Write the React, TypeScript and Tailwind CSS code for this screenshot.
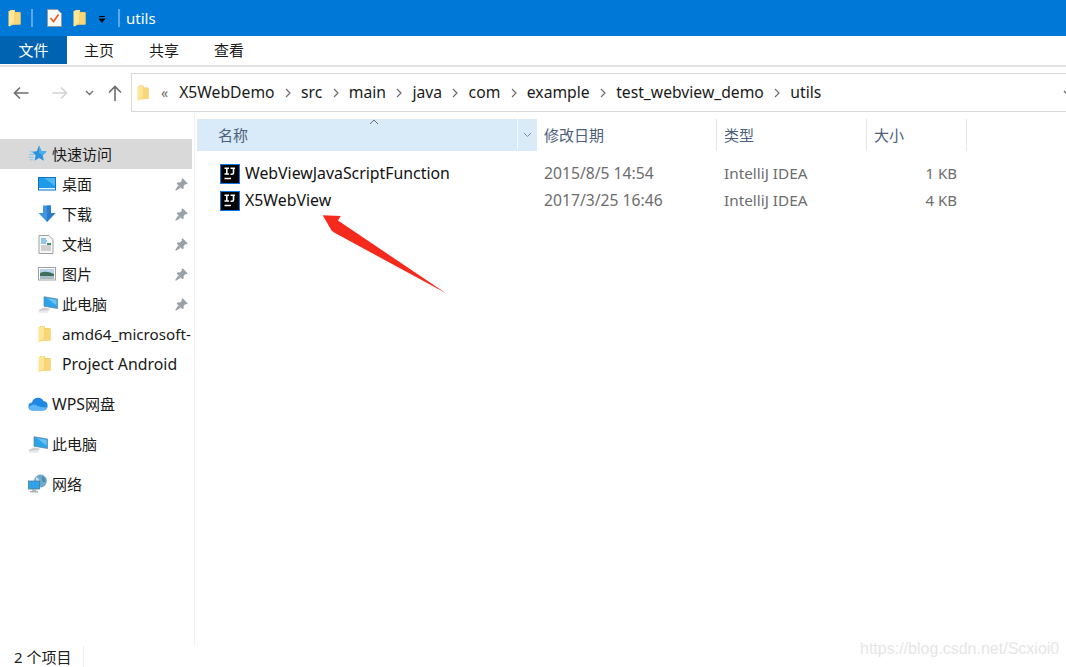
import React from "react";

const Folder = ({ className = "" }: { className?: string }) => (
  <svg viewBox="0 0 13 18" className={className}>
    <path d="M2 1 L7 1 L7 3 L11.5 3 Q12.5 3 12.5 4 L12.5 15.5 L2 15.5 Z" fill="#eec25c" />
    <path d="M0.5 2 L6.5 0.8 L6.5 14.5 L1.5 17.5 L0.5 17 Z" fill="#ffe596" />
    <path d="M6.5 3.5 L12.5 3.5 L12.5 15.5 L1.5 15.8 L6.5 13.5 Z" fill="#f8d577" />
  </svg>
);

const Pin = () => (
  <svg viewBox="0 0 14 14" className="h-[13px] w-[13px] shrink-0">
    <path d="M8.2 0.3 L13.7 5.8 L12.4 7 L11.3 6.5 L9.2 8.6 L9.4 11 L8 12.2 L1.8 6 L3 4.6 L5.4 4.8 L7.5 2.7 L7 1.6 Z" fill="#98a0a8" />
    <path d="M3.6 7.8 L6.2 10.4 L1 13.7 L0.3 13 Z" fill="#98a0a8" />
  </svg>
);

const Star = () => (
  <svg viewBox="0 0 19 18" className="h-[18px] w-[19px]">
    <path d="M11 0.5 L13.4 6 L18.6 6.4 L14.7 10.2 L15.9 15.8 L11 13 L6.6 15.8 L7.6 10.3 L4 6.8 L8.8 6.2 Z" fill="#2b93dd" />
    <path d="M11 0.5 L13.4 6 L18.6 6.4 L14.7 10.2 L11 8 Z" fill="#4aaeea" />
    <path d="M2 6.8 H5.5 M1 9.5 H6 M0.5 12.2 H5.5 M2 14.8 H5" stroke="#84c5f0" strokeWidth="1" />
  </svg>
);

const Desktop = () => (
  <svg viewBox="0 0 18 14" className="h-[14px] w-[18px]">
    <rect x="0.5" y="0.5" width="17" height="12.5" fill="#1e9be8" stroke="#0d74c6" />
    <path d="M6 1 H17 V9 Z" fill="#4db8f5" />
    <rect x="1" y="11" width="16" height="1.4" fill="#e8f6ff" />
  </svg>
);

const DownArrow = () => (
  <svg viewBox="0 0 18 18" className="h-[18px] w-[18px]">
    <path d="M5 0.5 H13 V8 H17.5 L9 17 L0.5 8 H5 Z" fill="#3f95e2" />
    <path d="M9 0.5 H13 V8 H17.5 L9 17 Z" fill="#2a7ccb" />
  </svg>
);

const Doc = () => (
  <svg viewBox="0 0 16 19" className="h-[19px] w-[16px]">
    <path d="M1 0.5 H11 L15 4.5 V18.5 H1 Z" fill="#f7f7f7" stroke="#a0a0a0" />
    <path d="M3 4 H8 M3 6 H9 M3 8 H8" stroke="#2f93d8" strokeWidth="1" />
    <path d="M3 11 H13 M3 13 H13 M3 15 H13" stroke="#a8a8a8" strokeWidth="1" />
    <rect x="9" y="8" width="4" height="2" fill="#3a8f6f" />
  </svg>
);

const Picture = () => (
  <svg viewBox="0 0 18 14" className="h-[14px] w-[18px]">
    <rect x="0.5" y="0.5" width="17" height="12.5" fill="#fff" stroke="#a0a0a0" />
    <rect x="2" y="2" width="14" height="5" fill="#b8d4ea" />
    <path d="M2 6 Q8 3 16 7 V11.5 H2 Z" fill="#3f6f5f" />
    <rect x="2" y="9" width="14" height="2.5" fill="#a8bec8" />
  </svg>
);

const Pc = () => (
  <svg viewBox="0 0 20 17" className="h-[17px] w-[20px]">
    <path d="M6 0.8 L19.5 3 V12.5 L6 10.2 Z" fill="#2ea3ea" stroke="#5f7f95" strokeWidth="0.7" />
    <path d="M9 2.2 L18.5 3.8 V9.5 Z" fill="#66c4f7" />
    <path d="M6 11.5 L12 12.8 L10.5 14.5 L1.5 15 L0.5 14 Z" fill="#cfcfcf" />
    <path d="M0.5 15.2 L10.5 15 L9.5 16.8 L1.5 16.8 Z" fill="#e6e6e6" />
  </svg>
);

const Cloud = () => (
  <svg viewBox="0 0 20 14" className="h-[14px] w-[20px]">
    <path d="M5 13.5 A4 4 0 0 1 4 5.5 A6.2 6.2 0 0 1 15.5 4 A4.8 4.8 0 0 1 15.5 13.5 Z" fill="#1f88e5" />
    <path d="M0.8 10 Q5 5.5 10 9 Q13 11 19.5 10 Q18.5 13.5 15 13.5 H5 Q1.5 13.5 0.8 10 Z" fill="#5db5f6" />
  </svg>
);

const Network = () => (
  <svg viewBox="0 0 20 20" className="h-[20px] w-[20px]">
    <circle cx="12.5" cy="7" r="6.4" fill="#6fa9c9" />
    <path d="M8 3 Q12 5 11 8 Q9 10 8 7 Z" fill="#cfe2ec" />
    <path d="M14 2 Q18 4 17 8 Q15 9 14 6 Z" fill="#4d8aae" />
    <rect x="0.5" y="7" width="11" height="8" fill="#2ea3ea" stroke="#4c7a96" strokeWidth="0.8" />
    <path d="M4 15 H8 V17 H10 V18.5 H2 V17 H4 Z" fill="#a9b4bb" />
  </svg>
);

const IJ = () => (
  <div className="flex h-5 w-5 shrink-0 flex-col items-start border border-[#0a78e6] bg-black px-[3px] pt-[2px]">
    <svg viewBox="0 0 12 14" className="h-[14px] w-[12px]">
      <path d="M0.5 1.2 H5 M2.8 1.2 V7 M0.5 7 H5 M6.5 1.2 H11 M9.5 1.2 V6 Q9.5 7.2 8 7.2 H6.5" stroke="#fff" strokeWidth="1.6" fill="none" />
      <path d="M0.5 11.5 H7" stroke="#fff" strokeWidth="1.5" />
    </svg>
  </div>
);

const Crumb = () => (
  <svg viewBox="0 0 8 10" className="h-[10px] w-2 shrink-0">
    <path d="M2 1 L6 5 L2 9" stroke="#6d6d6d" strokeWidth="1.2" fill="none" />
  </svg>
);

const Cjk = ({ children }: { children: React.ReactNode }) => <span className="text-[15px]">{children}</span>;

const NavItem = ({
  icon,
  label,
  pin,
  top,
  active,
}: {
  icon: React.ReactNode;
  label: React.ReactNode;
  pin?: boolean;
  top?: boolean;
  active?: boolean;
}) => (
  <div
    className={`flex h-[30px] items-center overflow-hidden whitespace-nowrap ${top ? "pl-[28px]" : "pl-[38px]"} ${active ? "bg-[#d9d9d9]" : ""}`}
  >
    <div className="flex w-[24px] shrink-0 items-center justify-start">{icon}</div>
    <span className="min-w-0 flex-1 text-[15.85px]">{label}</span>
    {pin && (
      <span className="ml-1 pr-[4px]">
        <Pin />
      </span>
    )}
  </div>
);

const crumbs = ["X5WebDemo", "src", "main", "java", "com", "example", "test_webview_demo", "utils"];

const files = [
  { name: "WebViewJavaScriptFunction", date: "2015/8/5 14:54", type: "IntelliJ IDEA", size: "1 KB" },
  { name: "X5WebView", date: "2017/3/25 16:46", type: "IntelliJ IDEA", size: "4 KB" },
];

export default function App() {
  return (
    <div
      className="relative flex h-[667px] w-[1066px] flex-col overflow-hidden bg-white text-[15px] leading-5 text-[#1a1a1a]"
      style={{ fontFamily: '"Noto Sans", "Noto Sans CJK SC", sans-serif' }}
    >
      {/* title bar */}
      <div className="flex h-[36px] shrink-0 items-center bg-[#0078d7] pl-[8px] text-white">
        <Folder className="h-[18px] w-[13px]" />
        <div className="ml-[10px] h-[18px] w-[2px] border border-[#5aa9e6] bg-[#0078d7]" />
        <svg viewBox="0 0 15 18" className="ml-[14px] h-[18px] w-[15px]">
          <path d="M0.5 0.5 H10.5 L14.5 4.5 V17.5 H0.5 Z" fill="#fafafa" stroke="#9a9a9a" />
          <path d="M3.5 9 L6.5 12.5 L11.5 5.5" stroke="#e8632a" strokeWidth="1.8" fill="none" />
        </svg>
        <Folder className="ml-[11px] h-[18px] w-[13px]" />
        <svg viewBox="0 0 8 8" className="ml-[12px] mt-[3px] h-2 w-2">
          <path d="M1 0.5 H7" stroke="#000" strokeWidth="1" />
          <path d="M0.5 2.5 H7.5 L4 7 Z" fill="#000" />
        </svg>
        <div className="ml-[12px] h-[18px] w-[2px] border border-[#5aa9e6] bg-[#0078d7]" />
        <span className="ml-[6px] pb-[1px]">utils</span>
      </div>

      {/* ribbon tabs */}
      <div className="flex h-[31px] shrink-0 items-start border-b-2 border-[#e3e3e3]">
        <div className="flex h-[28px] w-[67px] items-center justify-center bg-[#0063b1] text-white">文件</div>
        <div className="ml-[17px] flex h-[28px] items-center gap-[35px]">
          <span>主页</span>
          <span>共享</span>
          <span>查看</span>
        </div>
      </div>

      {/* nav row */}
      <div className="flex h-[46px] shrink-0 items-center pt-[5px]">
        <div className="flex w-[131px] shrink-0 items-center pl-[13px]">
          <svg viewBox="0 0 16 14" className="h-[14px] w-[16px]">
            <path d="M15.5 7 H1.5 M7 1.5 L1.5 7 L7 12.5" stroke="#6d6d6d" strokeWidth="1.6" fill="none" />
          </svg>
          <svg viewBox="0 0 16 14" className="ml-[23px] h-[14px] w-[16px]">
            <path d="M0.5 7 H14.5 M9 1.5 L14.5 7 L9 12.5" stroke="#d2d2d2" strokeWidth="1.6" fill="none" />
          </svg>
          <svg viewBox="0 0 9 6" className="ml-[17px] h-[6px] w-[9px]">
            <path d="M1 1 L4.5 4.5 L8 1" stroke="#6d6d6d" strokeWidth="1.3" fill="none" />
          </svg>
          <svg viewBox="0 0 14 16" className="ml-[14px] h-[16px] w-[14px]">
            <path d="M7 16 V1.5 M1 7.5 L7 1.5 L13 7.5" stroke="#6d6d6d" strokeWidth="1.6" fill="none" />
          </svg>
        </div>
        <div className="flex h-[39px] min-w-0 flex-1 items-center border border-r-0 border-[#d9d9d9] pl-[5px] whitespace-nowrap">
          <Folder className="h-[18px] w-[12px] shrink-0" />
          <span className="ml-[12px] mr-[11px] text-[14px] text-[#6d6d6d]">«</span>
          {crumbs.map((c, i) => (
            <React.Fragment key={c}>
              {i > 0 && (
                <span className="mx-[9.25px]">
                  <Crumb />
                </span>
              )}
              <span className="pb-[2px] text-[15.7px]">{c}</span>
            </React.Fragment>
          ))}
          <div className="flex-1" />
          <svg viewBox="0 0 9 6" className="mr-[-6px] h-[6px] w-[9px] shrink-0">
            <path d="M1 1 L4.5 4.5 L8 1" stroke="#6d6d6d" strokeWidth="1.3" fill="none" />
          </svg>
        </div>
      </div>

      {/* main */}
      <div className="flex min-h-0 flex-1">
        <aside className="w-[195px] shrink-0 border-r border-[#f0f0f0] pr-[2px] pt-[26px]">
          <NavItem top active icon={<Star />} label={<Cjk>快速访问</Cjk>} />
          <NavItem pin icon={<Desktop />} label={<Cjk>桌面</Cjk>} />
          <NavItem pin icon={<DownArrow />} label={<Cjk>下载</Cjk>} />
          <NavItem pin icon={<Doc />} label={<Cjk>文档</Cjk>} />
          <NavItem pin icon={<Picture />} label={<Cjk>图片</Cjk>} />
          <NavItem pin icon={<Pc />} label={<Cjk>此电脑</Cjk>} />
          <NavItem icon={<Folder className="h-[18px] w-[13px]" />} label={<span className="text-[15.2px]">amd64_microsoft-</span>} />
          <NavItem icon={<Folder className="h-[18px] w-[13px]" />} label="Project Android" />
          <div className="mt-[10px]">
            <NavItem top icon={<Cloud />} label={<>WPS<Cjk>网盘</Cjk></>} />
          </div>
          <div className="mt-[10px]">
            <NavItem top icon={<Pc />} label={<Cjk>此电脑</Cjk>} />
          </div>
          <div className="mt-[10px]">
            <NavItem top icon={<Network />} label={<Cjk>网络</Cjk>} />
          </div>
        </aside>

        <section className="min-w-0 flex-1 pl-[2px] pt-[6px]">
          <div className="flex h-[32px] text-[#4c607a]">
            <div className="relative flex w-[340px] items-center justify-between bg-[#d9ebf9] pl-[21px]">
              <span>名称</span>
              <svg viewBox="0 0 10 6" className="absolute left-[172px] top-0 h-[6px] w-[10px]">
                <path d="M1 5 L5 1 L9 5" stroke="#6d6d6d" strokeWidth="1" fill="none" />
              </svg>
              <div className="flex h-full w-[20px] items-center justify-center border-l border-[#f5fafe]">
                <svg viewBox="0 0 9 6" className="h-[6px] w-[9px]">
                  <path d="M1 1 L4.5 4.5 L8 1" stroke="#7a8ea3" strokeWidth="1" fill="none" />
                </svg>
              </div>
            </div>
            <div className="flex w-[180px] items-center border-r border-[#e5e5e5] pl-[7px]">修改日期</div>
            <div className="flex w-[150px] items-center border-r border-[#e5e5e5] pl-[7px]">类型</div>
            <div className="flex w-[100px] items-center border-r border-[#e5e5e5] pl-[7px]">大小</div>
          </div>
          <div className="pt-[9px]">
            {files.map((f) => (
              <div key={f.name} className="flex h-[27px] items-center">
                <div className="flex w-[340px] items-center gap-[5px] pl-[23px] text-[#111]">
                  <IJ />
                  <span className="pb-[2px] text-[15.85px]">{f.name}</span>
                </div>
                <div className="w-[180px] pb-[2px] pl-[7px] text-[15.7px] text-[#6d6d6d]">{f.date}</div>
                <div className="w-[150px] pb-[2px] pl-[7px] text-[15.3px] text-[#6d6d6d]">{f.type}</div>
                <div className="w-[90px] pb-[2px] text-right text-[15px] text-[#6d6d6d]">{f.size}</div>
              </div>
            ))}
          </div>
        </section>
      </div>

      {/* status bar */}
      <div className="flex h-[21px] shrink-0 items-center pl-[14px] text-[15px] text-[#222222]">
        <span>2 个项目</span>
        <div className="ml-[12px] h-full w-px bg-[#eeeeee]" />
      </div>

      {/* annotation arrow drawn over the screenshot */}
      <svg className="absolute left-[315px] top-[205px] h-[95px] w-[135px]" viewBox="0 0 135 95">
        <path d="M7.7 10.3 L25.7 11 L23 15.5 L131 88.3 L20 28 L16.7 25.7 Z" fill="#f5291c" />
      </svg>

      {/* watermark */}
      <span
        className="absolute left-[860px] top-[639px] text-[16px] text-[#e6e6e6]"
        style={{ fontFamily: '"Liberation Sans", sans-serif' }}
      >
        https://blog.csdn.net/Scxioi0
      </span>
    </div>
  );
}
